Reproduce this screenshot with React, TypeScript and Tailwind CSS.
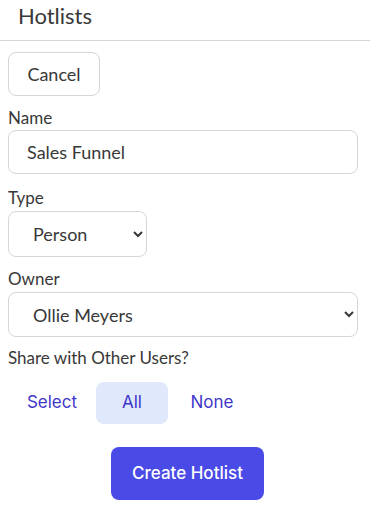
export default function App() {
  return (
    <div className="min-h-screen bg-white font-['Lato',sans-serif] text-[17px] text-[#383838]">
      <header className="border-b border-[#d6d6d6] px-[18px] pt-[2px] pb-[10px]">
        <h1 className="text-[22px] leading-[28px] text-[#383838]">Hotlists</h1>
      </header>

      <div className="px-2 pt-[11px]">
        <button className="h-[44px] w-[92px] rounded-[8px] border border-[#d6d6d6] bg-white text-[18px] text-[#383838]">
          Cancel
        </button>

        <div className="mt-[11px]">
          <label className="block leading-[22px]">Name</label>
          <input
            defaultValue="Sales Funnel"
            className="mt-[1px] h-[44px] w-[350px] rounded-[8px] border border-[#d6d6d6] px-[18px] text-[18px] text-[#383838] outline-none"
          />
        </div>

        <div className="mt-[13px]">
          <label className="block leading-[22px]">Type</label>
          <select
            defaultValue="Person"
            className="mt-[2px] h-[46px] w-[139px] rounded-[8px] border border-[#d6d6d6] bg-white pl-[20px] pr-[8px] text-[18px] text-[#383838] outline-none"
          >
            <option>Person</option>
            <option>Company</option>
          </select>
        </div>

        <div className="mt-[11px]">
          <label className="block leading-[22px]">Owner</label>
          <select
            defaultValue="Ollie Meyers"
            className="mt-[2px] h-[45px] w-[350px] rounded-[8px] border border-[#d6d6d6] bg-white pl-[20px] pr-[8px] text-[18px] text-[#383838] outline-none"
          >
            <option>Ollie Meyers</option>
          </select>
        </div>

        <p className="mt-[10px] leading-[22px]">Share with Other Users?</p>

        <div className="mt-[13px] flex items-center font-['Inter',sans-serif] text-[17px] text-[#3f37c9]">
          <button className="h-[42px] w-[88px] rounded-[8px]">Select</button>
          <button className="h-[42px] w-[72px] rounded-[8px] bg-[#e0e8fc]">All</button>
          <button className="h-[42px] w-[88px] rounded-[8px]">None</button>
        </div>

        <div className="mt-[23px] flex justify-center">
          <button className="ml-[5px] h-[53px] w-[153px] rounded-[8px] bg-[#4a4ae6] font-['Inter',sans-serif] text-[17px] font-medium text-white">
            Create Hotlist
          </button>
        </div>
      </div>
    </div>
  );
}
